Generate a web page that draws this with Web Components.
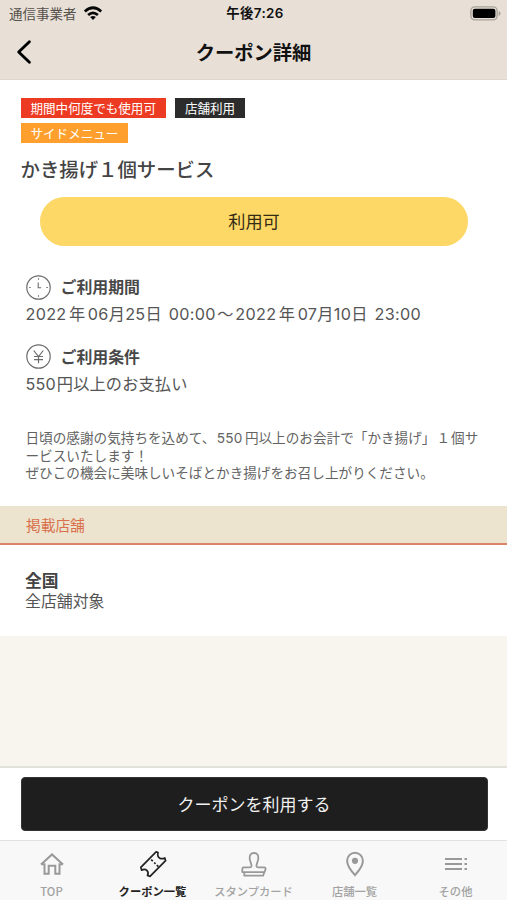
<!DOCTYPE html>
<html lang="ja">
<head>
<meta charset="utf-8">
<title>クーポン詳細</title>
<style>
html,body{margin:0;height:100%}
body{font-family:Inter,"Noto Sans CJK JP",sans-serif;color:#4a4a4a;overflow:hidden}
</style>
</head>
<body>
<coupon-app></coupon-app>
<script>
function define(name, css, html) {
  customElements.define(name, class extends HTMLElement {
    constructor() {
      super();
      this.attachShadow({mode: 'open'}).innerHTML =
        `<style>*{box-sizing:border-box}svg{display:block}${css}</style>${html}`;
    }
  });
}

define('status-bar', `
:host{display:grid;grid-template-columns:1fr auto 1fr;align-items:center;height:26px;padding:0 6px 0 9px;color:#111}
.left{display:flex;align-items:center;gap:6px;font:13.5px/20px "Noto Sans CJK JP",sans-serif;color:#55514c}
.time{font-size:13.4px;font-weight:600;line-height:20px;letter-spacing:.4px;white-space:nowrap}
.bat{justify-self:end}`, `
<div class="left"><span>通信事業者</span>
<svg width="20" height="15" viewBox="0 0 20 15"><g fill="none" stroke="#080808" stroke-width="2.7"><path d="M1.8 5.4Q10-1.9 18.2 5.4"/><path d="M5.1 9Q10 4.6 14.9 9"/></g><path d="M7.1 11.1Q10 8.7 12.9 11.1L10 14Z" fill="#080808"/></svg></div>
<div class="time">午後7:26</div>
<svg class="bat" width="31" height="15" viewBox="0 0 31 15"><rect x=".9" y=".9" width="26.2" height="13" rx="4" fill="none" stroke="#a7a29b" stroke-width="1.4"/><rect x="2.8" y="2.8" width="22.6" height="9.2" rx="2" fill="#000"/><path d="M28.6 5v5Q30.6 9.2 30.6 7.5T28.6 5Z" fill="#a7a29b"/></svg>`);

define('nav-header', `
:host{display:grid;grid-template-columns:50px 1fr 50px;align-items:center;height:54px;padding-bottom:2px;border-bottom:1px solid #ddd6ca}
svg{margin-left:15px}
h1{margin:0;text-align:center;font:700 19.3px/28px "Noto Sans CJK JP",sans-serif;color:#111}`, `
<svg width="20" height="26" viewBox="0 0 20 26"><path d="M14.4 2.7L3.7 13L14.4 23.3" fill="none" stroke="#000" stroke-width="2.9" stroke-linecap="round" stroke-linejoin="round"/></svg>
<h1><slot></slot></h1>`);

define('tag-label', `
:host{display:inline-block;height:20px;padding:0 10px;background:var(--tag);color:#fff;font:12.55px/19px "Noto Sans CJK JP",sans-serif;white-space:nowrap}`, `<slot></slot>`);

define('info-block', `
:host{display:block}
.head{display:flex;align-items:center;gap:10px;height:26px;font:700 15.9px/24px "Noto Sans CJK JP",sans-serif;color:#484848}
.body{font-size:16.2px;line-height:26px;margin-top:1px;color:#555;white-space:nowrap;letter-spacing:var(--track,.3px);word-spacing:2px}`, `
<div class="head"><slot name="icon"></slot><slot name="title"></slot></div>
<div class="body"><slot></slot></div>`);

define('icon-clock', `:host{display:block;width:25px;height:25px}`, `
<svg width="25" height="25" viewBox="0 0 25 25" fill="none" stroke="#6c6c6c"><circle cx="12.5" cy="12.5" r="11.7" stroke-width="1.2"/><path d="M12.5 3.2v1.5M12.5 20.3v1.5M3.2 12.5h1.5M20.3 12.5h1.5M12.2 7.6v5.2h3" stroke-width="1.1"/></svg>`);
define('icon-yen', `:host{display:block;width:25px;height:25px}`, `
<svg width="25" height="25" viewBox="0 0 25 25" fill="none" stroke="#6c6c6c"><circle cx="12.5" cy="12.5" r="11.7" stroke-width="1.2"/><path d="M7.7 6.5l4.8 6 4.8-6M12.5 12.5v6.8M8 12.5h9M8 15.6h9" stroke-width="1.2"/></svg>`);

define('section-bar', `
:host{display:block;height:39px;padding-left:26px;background:#ece4cf;border-bottom:2px solid #dc8468;color:#d9704c;font:14.7px/38px "Noto Sans CJK JP",sans-serif}`, `<slot></slot>`);

define('shop-item', `
:host{display:block;height:91px;padding:23px 25px 0;background:#fff;font-family:"Noto Sans CJK JP",sans-serif}
b{display:block;font-size:16.8px;line-height:24px;color:#444}
div{font-size:15.9px;line-height:18px;color:#555}`, `
<b><slot name="name"></slot></b><div><slot></slot></div>`);

define('action-bar', `
:host{display:block;height:74px;padding:8.5px 19.5px 0 20.5px;background:#fff;border-top:2px solid #e2e2dd}
button{display:block;width:100%;height:54px;padding:0;border:1px solid #333;border-radius:4px;background:#1e1e1e;color:#f1f1f1;font:17px/52px "Noto Sans CJK JP",sans-serif}`, `<button><slot></slot></button>`);

define('tab-item', `
:host{display:flex;flex-direction:column;align-items:center;color:#a2a2a2;font:500 11.3px/16px "Noto Sans CJK JP",sans-serif;white-space:nowrap;padding-top:8px}
:host([active]){color:#222;font-weight:700}
.i{height:30px;margin-bottom:4px}
::slotted(svg){display:block}`, `<div class="i"><slot name="icon"></slot></div><slot></slot>`);

define('tab-bar', `
:host{display:grid;grid-template-columns:repeat(5,1fr);height:60px;background:#f8f8f8;border-top:1px solid #e2e2e2;padding:0 1px}`, `
<tab-item><svg slot="icon" width="30" height="30" viewBox="0 0 30 30" fill="none" stroke="#999" stroke-width="2"><path d="M4 15.6L15 5.4L26 15.6"/><path d="M4.3 15.300h3.200v9.400h4.200v-8h6.600v8h4.200v-9.400h3.200"/></svg>TOP</tab-item>
<tab-item active><svg slot="icon" width="30" height="30" viewBox="0 0 30 30" fill="none" stroke="#222" stroke-width="1.7" stroke-linejoin="round"><path d="M2.800 18.300L18.100 2.900L20.100 3.500Q18.900 7.200 21.500 9Q23.800 10.500 26.800 8.900L27.600 11.700L12 27.400L9.500 26.500Q11 23.500 8.800 21.400Q6.600 19.500 3.700 21.200Z"/><path d="M13.200 10.600l1.600 1.500M16.200 13.500l1.300 1.300M18.800 16.100l1.600 1.500"/></svg>クーポン一覧</tab-item>
<tab-item><svg slot="icon" width="30" height="30" viewBox="0 0 30 30" fill="none" stroke="#999" stroke-width="1.8" stroke-linejoin="round"><path d="M3.300 23.100v-3.200q0-1.500 1.500-1.500h5.700q2.300 0 2-2.100l-1.800-6.200Q10.200 4.200 15 3.900Q19.800 4.200 19.300 10.100l-1.800 6.200q-.3 2.100 2 2.100h5.700q1.500 0 1.500 1.500l-1.200 3.200Z"/><path d="M5.300 23.100v3.600h18.800l1.200-3.600"/></svg>スタンプカード</tab-item>
<tab-item><svg slot="icon" width="30" height="30" viewBox="0 0 30 30" fill="none" stroke="#999" stroke-width="2"><path d="M15 26.200Q7.100 17.500 7.100 11.800A7.900 8 0 0 1 22.900 11.800Q22.900 17.500 15 26.200Z"/><circle cx="15" cy="11.800" r="3.100" fill="#999" stroke="none"/></svg>店舗一覧</tab-item>
<tab-item><svg slot="icon" width="30" height="30" viewBox="0 0 30 30" fill="none" stroke="#999" stroke-width="2"><path d="M4 10h17M4 15h17M4 20h17M23.500 10h2.500M23.500 15h2.500M23.500 20h2.500"/></svg>その他</tab-item>`);

define('coupon-detail', `
:host{display:block;height:426px;background:#fff;padding-top:18px}
.tags{display:flex;flex-wrap:wrap;column-gap:9px;row-gap:5px;width:260px;margin-left:20.5px}
h2{margin:12px 0 0 20.5px;font:500 19.4px/28px "Noto Sans CJK JP",sans-serif;color:#444}
.state{margin:14px 39px 0 40px;height:48.5px;border-radius:25px;background:#fdd866;color:#332b14;text-align:center;font:17.2px/48px "Noto Sans CJK JP",sans-serif}
.infos{display:flex;flex-direction:column;gap:16.5px;margin:28.5px 0 0 25.500px}
.k{margin:0 2.400px}
.w{margin:0 1.500px}
p{margin:33.500px 0 0 25.500px;font:13.62px/17.500px Inter,"Noto Sans CJK JP",sans-serif;color:#636363;white-space:nowrap}
.u{letter-spacing:.2px;margin:0 2.300px 0 1.500px}
.n{margin:0 1px}`, `
<div class="tags">
<tag-label style="--tag:#ed3a22">期間中何度でも使用可</tag-label><tag-label style="--tag:#2c2c2c">店舗利用</tag-label>
<tag-label style="--tag:#ffa02e">サイドメニュー</tag-label></div>
<h2>かき揚げ１個サービス</h2>
<div class="state">利用可</div>
<div class="infos">
<info-block><icon-clock slot="icon"></icon-clock><span slot="title">ご利用期間</span>2022<span class="k">年</span>06月25日 00:00<span class="w">〜</span>2022<span class="k">年</span>07月10日 23:00</info-block>
<info-block style="--track:.15px"><icon-yen slot="icon"></icon-yen><span slot="title">ご利用条件</span>550<span style="margin-left:1px">円以上のお支払い</span></info-block>
</div>
<p>日頃の感謝の気持ちを込めて、<span class="u">550</span>円以上のお会計で「かき揚げ」<span class="n">１</span>個サ<br>ービスいたします！<br>ぜひこの機会に美味しいそばとかき揚げをお召し上がりください。</p>`);

define('coupon-app', `
:host{display:flex;flex-direction:column;width:507px;height:900px;background:#f7f5ee}
header{background:#e8e0d7}
main{flex:1}`, `
<header><status-bar></status-bar><nav-header>クーポン詳細</nav-header></header>
<main><coupon-detail></coupon-detail><section-bar>掲載店舗</section-bar>
<shop-item><span slot="name">全国</span>全店舗対象</shop-item></main>
<action-bar>クーポンを利用する</action-bar>
<tab-bar></tab-bar>`);
</script>
</body>
</html>
